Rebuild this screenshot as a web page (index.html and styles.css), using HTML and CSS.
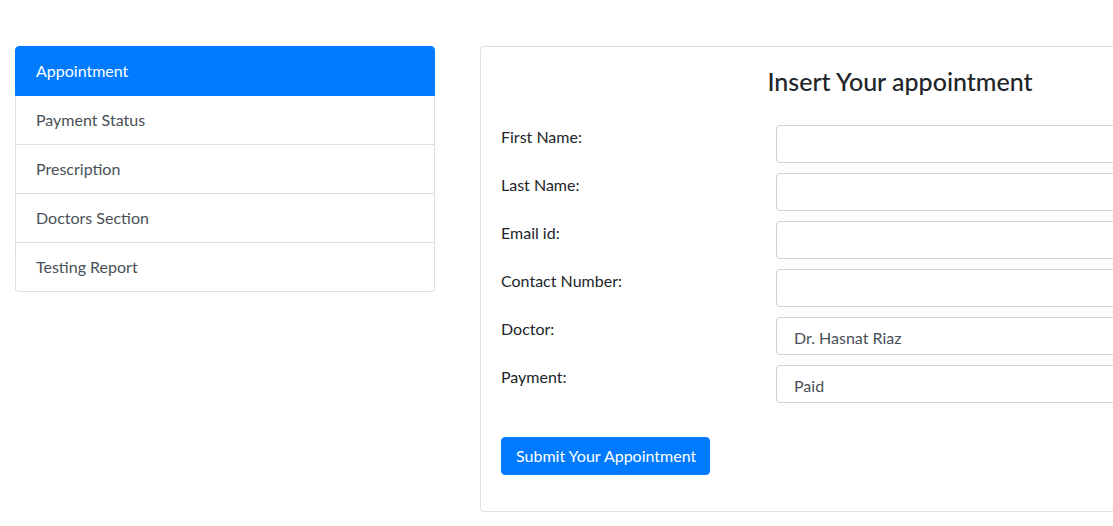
FILE: index.html
```html
<!DOCTYPE html>
<html lang="en">
<head>
<meta charset="utf-8">
<title>Appointment</title>
<link rel="stylesheet" href="styles.css">
</head>
<body>
<div class="page">
  <aside class="sidebar">
    <nav class="list-group">
      <a class="list-item active" href="#">Appointment</a>
      <a class="list-item" href="#">Payment Status</a>
      <a class="list-item" href="#">Prescription</a>
      <a class="list-item" href="#">Doctors Section</a>
      <a class="list-item" href="#">Testing Report</a>
    </nav>
  </aside>
  <main class="card">
    <h4 class="card-title">Insert Your appointment</h4>
    <form class="form">
      <div class="form-row">
        <label class="form-label" for="fn">First Name:</label>
        <input class="field" id="fn" type="text">
      </div>
      <div class="form-row">
        <label class="form-label" for="ln">Last Name:</label>
        <input class="field" id="ln" type="text">
      </div>
      <div class="form-row">
        <label class="form-label" for="em">Email id:</label>
        <input class="field" id="em" type="email">
      </div>
      <div class="form-row">
        <label class="form-label" for="cn">Contact Number:</label>
        <input class="field" id="cn" type="text">
      </div>
      <div class="form-row">
        <label class="form-label" for="dr">Doctor:</label>
        <select class="field field-select" id="dr">
          <option>Dr. Hasnat Riaz</option>
        </select>
      </div>
      <div class="form-row">
        <label class="form-label" for="pm">Payment:</label>
        <select class="field field-select" id="pm">
          <option>Paid</option>
        </select>
      </div>
      <button class="btn-submit" type="button">Submit Your Appointment</button>
    </form>
  </main>
</div>
</body>
</html>
```
FILE: styles.css
```css
html, body {
  margin: 0;
  padding: 0;
  background: #fff;
  overflow: hidden;
}

body {
  font-family: Lato, "Open Sans", "Liberation Sans", sans-serif;
  font-size: 16px;
  line-height: 1.5;
  color: #212529;
}

.page {
  display: flex;
  align-items: flex-start;
  gap: 45px;
  padding: 46px 0 0 15px;
  width: 1113px;
  box-sizing: border-box;
}

.sidebar {
  flex: 0 0 420px;
}

.list-group {
  display: flex;
  flex-direction: column;
  border-radius: 4px;
}

.list-item {
  display: block;
  padding: 12px 20px;
  color: #495057;
  text-decoration: none;
  background: #fff;
  border: 1px solid rgba(0, 0, 0, 0.125);
  line-height: 24px;
}

.list-item + .list-item {
  border-top-width: 0;
}

.list-item:first-child {
  border-top-left-radius: 4px;
  border-top-right-radius: 4px;
}

.list-item:last-child {
  border-bottom-left-radius: 4px;
  border-bottom-right-radius: 4px;
}

.list-item.active {
  background: #007bff;
  border-color: #007bff;
  color: #fff;
}

.card {
  flex: 0 0 840px;
  box-sizing: border-box;
  padding: 20px;
  border: 1px solid rgba(0, 0, 0, 0.125);
  border-radius: 4px;
  background: #fff;
}

.card-title {
  margin: 0 0 29px;
  font-size: 25px;
  font-weight: 500;
  line-height: 29px;
  text-align: center;
  color: #212529;
}

.form {
  display: flex;
  flex-direction: column;
  align-items: flex-start;
  margin-bottom: 16px;
}

.form-row {
  display: grid;
  grid-template-columns: 275px 1fr;
  width: 100%;
  margin-bottom: 10px;
}

.form-label {
  line-height: 24px;
  color: #212529;
}

.field {
  box-sizing: border-box;
  height: 38px;
  width: 100%;
  padding: 6px 12px;
  font: inherit;
  color: #495057;
  background: #fff;
  border: 1px solid #ced4da;
  border-radius: 4px;
  outline: none;
}

.field-select {
  appearance: none;
  -webkit-appearance: none;
  padding: 8px 16px 4px 17px;
  line-height: 24px;
}

.btn-submit {
  margin-top: 24px;
  height: 38px;
  padding: 6px 13px 6px 14px;
  font: inherit;
  line-height: 24px;
  color: #fff;
  background: #007bff;
  border: 1px solid #007bff;
  border-radius: 4px;
  cursor: pointer;
}
```
